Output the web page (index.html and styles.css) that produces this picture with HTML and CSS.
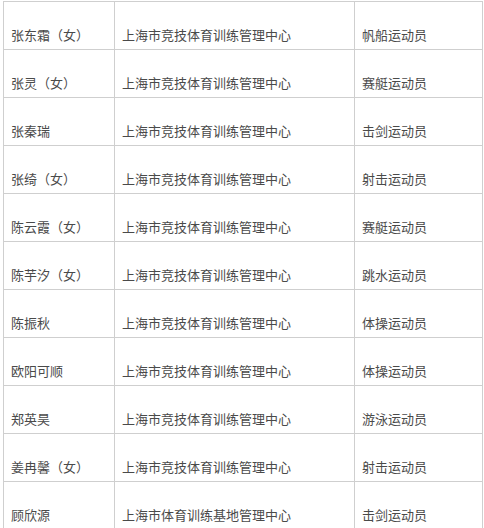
FILE: index.html
```html
<!DOCTYPE html>
<html lang="zh">
<head>
<meta charset="utf-8">
<link rel="stylesheet" href="styles.css">
</head>
<body>
<div class="wrap">
<table class="roster">
<colgroup><col class="c1"><col class="c2"><col class="c3"></colgroup>
<tbody>
<tr><td>张东霜（女）</td><td>上海市竞技体育训练管理中心</td><td>帆船运动员</td></tr>
<tr><td>张灵（女）</td><td>上海市竞技体育训练管理中心</td><td>赛艇运动员</td></tr>
<tr><td>张秦瑞</td><td>上海市竞技体育训练管理中心</td><td>击剑运动员</td></tr>
<tr><td>张绮（女）</td><td>上海市竞技体育训练管理中心</td><td>射击运动员</td></tr>
<tr><td>陈云霞（女）</td><td>上海市竞技体育训练管理中心</td><td>赛艇运动员</td></tr>
<tr><td>陈芋汐（女）</td><td>上海市竞技体育训练管理中心</td><td>跳水运动员</td></tr>
<tr><td>陈振秋</td><td>上海市竞技体育训练管理中心</td><td>体操运动员</td></tr>
<tr><td>欧阳可顺</td><td>上海市竞技体育训练管理中心</td><td>体操运动员</td></tr>
<tr><td>郑英昊</td><td>上海市竞技体育训练管理中心</td><td>游泳运动员</td></tr>
<tr><td>姜冉馨（女）</td><td>上海市竞技体育训练管理中心</td><td>射击运动员</td></tr>
<tr><td>顾欣源</td><td>上海市体育训练基地管理中心</td><td>击剑运动员</td></tr>
</tbody>
</table>
</div>
</body>
</html>
```
FILE: styles.css
```css
html, body {
  margin: 0;
  padding: 0;
  background: #fff;
}
.wrap {
  padding: 1px 0 0 3px;
}
.roster {
  border-collapse: collapse;
  table-layout: fixed;
  width: 479px;
  font-family: "Noto Sans CJK SC", "Noto Sans", sans-serif;
  font-size: 13px;
  color: #4a4a4a;
}
.c1 { width: 111px; }
.c2 { width: 240px; }
.c3 { width: 128px; }
.roster td {
  border: 1px solid #cfcfcf;
  padding: 23px 7px 5px 7px;
  line-height: 19px;
  height: 19px;
  white-space: nowrap;
  vertical-align: top;
}
```
